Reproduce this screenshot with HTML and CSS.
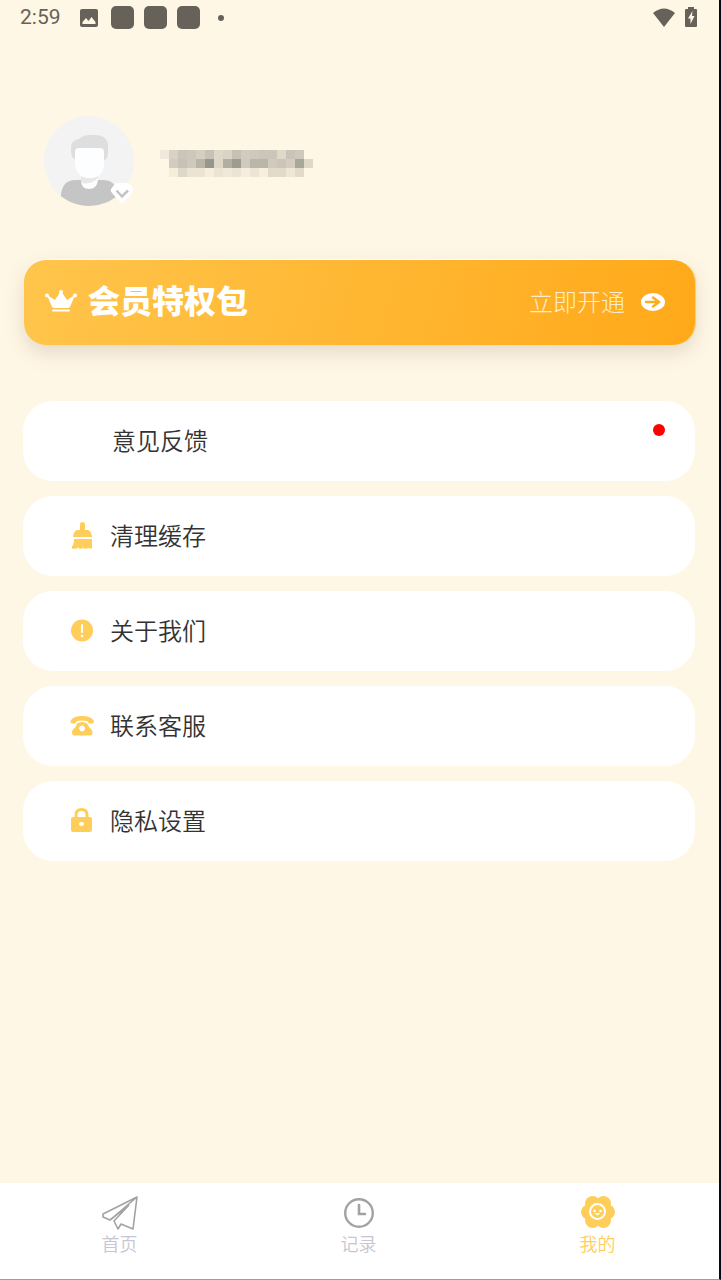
FILE: index.html
```
<!DOCTYPE html>
<html lang="zh-CN">
<head>
    <meta charset="UTF-8">
    <meta name="viewport" content="width=device-width, initial-scale=1.0">
    <title>我的</title>
    <link rel="stylesheet" href="styles.css">
</head>
<body>
    <div class="status-bar">
        <span class="time">2:59</span>
        <svg class="status-picture" width="18" height="18" viewBox="0 0 18 18">
            <rect width="18" height="18" rx="2" fill="#66625a"/>
            <path d="M2.500 15v-2l3.500-4 2.500 3 3-4 4 5v2z" fill="#fff7e5"/>
        </svg>
        <div class="status-apps">
            <span class="status-app"></span>
            <span class="status-app"></span>
            <span class="status-app"></span>
        </div>
        <span class="status-dot"></span>
        <svg class="status-wifi" width="24" height="19" viewBox="0 0 24 19">
            <path d="M1 5Q12-4 23 5L12 19z" fill="#66625a"/>
        </svg>
        <svg width="12" height="21" viewBox="0 0 12 21">
            <path d="M1 2h2V0h6v2h2q1 0 1 1v16q0 1-1 1H1q-1 0-1-1V3q0-1 1-1z" fill="#66625a"/>
            <path d="M7.500 4L3 11.500h2.500V17L9.500 9H7z" fill="#fff7e5"/>
        </svg>
    </div>

    <div class="profile">
        <div class="avatar">
            <svg width="90" height="90" viewBox="0 0 90 90">
                <clipPath id="avatar-clip"><circle cx="45" cy="45" r="45"/></clipPath>
                <g clip-path="url(#avatar-clip)">
                    <rect width="90" height="90" fill="#f3f3f3"/>
                    <path d="M17 90V78q2-14 14-14h28q12 0 15 13v13z" fill="#c5c5c5"/>
                    <path d="M37 56h17v8q-1 9-9 9t-8-9z" fill="#fcfdfd"/>
                    <path d="M37 60q9 5 17-1v3q-6 7-17 5z" fill="#e8e8e8"/>
                    <path d="M30 43q-3-3-3-7v-6q1-6 8-7 4-4 10-4h7q12 1 12 11v7q0 5-3 7z" fill="#dedede"/>
                    <path d="M31 36q0-4 4-4h21q4 0 4 4v11q0 15-14 15T31 47z" fill="#fcfeff"/>
                </g>
            </svg>
            <svg class="avatar-badge" width="24" height="22" viewBox="0 0 24 22">
                <path d="M7 1h10q3 0 4 2l2 4q1 2-1 4l-8 9q-2 2-4 0L2 11q-2-2-1-4l3-4q1-2 3-2z" fill="#fff"/>
                <path d="M6.500 8.500l5.500 6 6-6" fill="none" stroke="#c5c5c5" stroke-width="2.500"/>
            </svg>
        </div>
        <!-- 打码的用户名 -->
        <svg class="user-name" width="153" height="27" viewBox="0 0 17 3" shape-rendering="crispEdges">
            <rect x="0" y="0" width="1" height="1" fill="#f1e9d9"/>
            <rect x="1" y="0" width="1" height="1" fill="#d9d2c4"/>
            <rect x="2" y="0" width="1" height="1" fill="#cbc4b9"/>
            <rect x="3" y="0" width="1" height="1" fill="#cec7bb"/>
            <rect x="4" y="0" width="1" height="1" fill="#d5cec1"/>
            <rect x="5" y="0" width="1" height="1" fill="#c8c1b6"/>
            <rect x="6" y="0" width="1" height="1" fill="#dfd8c8"/>
            <rect x="7" y="0" width="1" height="1" fill="#d9d2c5"/>
            <rect x="8" y="0" width="1" height="1" fill="#c7c0b5"/>
            <rect x="9" y="0" width="1" height="1" fill="#d2cbbf"/>
            <rect x="10" y="0" width="1" height="1" fill="#cfc8bc"/>
            <rect x="11" y="0" width="2" height="1" fill="#ccc5ba"/>
            <rect x="13" y="0" width="1" height="1" fill="#e0d9c8"/>
            <rect x="14" y="0" width="1" height="1" fill="#cac3b9"/>
            <rect x="15" y="0" width="1" height="1" fill="#cfc8bd"/>
            <rect x="1" y="1" width="1" height="1" fill="#d2cbc0"/>
            <rect x="2" y="1" width="1" height="1" fill="#c8c2b6"/>
            <rect x="3" y="1" width="1" height="1" fill="#cfc8bc"/>
            <rect x="4" y="1" width="1" height="1" fill="#b9b5a8"/>
            <rect x="5" y="1" width="1" height="1" fill="#98958b"/>
            <rect x="6" y="1" width="1" height="1" fill="#ded7c8"/>
            <rect x="7" y="1" width="1" height="1" fill="#b2afa2"/>
            <rect x="8" y="1" width="1" height="1" fill="#9e9b90"/>
            <rect x="9" y="1" width="1" height="1" fill="#d0c9bd"/>
            <rect x="10" y="1" width="2" height="1" fill="#bab6a9"/>
            <rect x="12" y="1" width="1" height="1" fill="#d0c9bc"/>
            <rect x="13" y="1" width="1" height="1" fill="#cdc5b9"/>
            <rect x="14" y="1" width="1" height="1" fill="#d5cdc0"/>
            <rect x="15" y="1" width="1" height="1" fill="#a9a69a"/>
            <rect x="16" y="1" width="1" height="1" fill="#dfd8c8"/>
            <rect x="1" y="2" width="1" height="1" fill="#f4edda"/>
            <rect x="2" y="2" width="1" height="1" fill="#dfd8c8"/>
            <rect x="3" y="2" width="2" height="1" fill="#ece4d3"/>
            <rect x="5" y="2" width="1" height="1" fill="#f5eedc"/>
            <rect x="6" y="2" width="1" height="1" fill="#ebe4d3"/>
            <rect x="7" y="2" width="1" height="1" fill="#f0e9d7"/>
            <rect x="8" y="2" width="1" height="1" fill="#ebe4d4"/>
            <rect x="9" y="2" width="1" height="1" fill="#f5eedc"/>
            <rect x="10" y="2" width="1" height="1" fill="#ece4d4"/>
            <rect x="11" y="2" width="1" height="1" fill="#f6efdd"/>
            <rect x="12" y="2" width="2" height="1" fill="#e2dbca"/>
            <rect x="14" y="2" width="1" height="1" fill="#eee7d6"/>
            <rect x="15" y="2" width="1" height="1" fill="#e2dbca"/>
        </svg>
    </div>

    <a class="vip-banner" href="#">
        <svg width="32" height="23" viewBox="0 0 32 23" fill="#fff">
            <circle cx="16" cy="2" r="2"/>
            <circle cx="2" cy="5.500" r="2"/>
            <circle cx="30" cy="5.500" r="2"/>
            <path d="M2 5l8 5 6-9 6 9 8-5-5 12q-1 1-3 1H10q-2 0-3-1z"/>
            <rect x="7" y="19.500" width="18" height="2" rx="1"/>
        </svg>
        <span class="vip-title">会员特权包</span>
        <span class="vip-open">立即开通</span>
        <svg width="24" height="18" viewBox="0 0 24 18">
            <ellipse cx="12" cy="9" rx="12" ry="9" fill="#fff"/>
            <path d="M5 9h13M12 4.500l6 4.500-6 4.500" fill="none" stroke="#ffad20" stroke-width="2.500" stroke-linecap="round"/>
        </svg>
    </a>

    <div class="menu">
        <button class="menu-item feedback">
            <span>意见反馈</span>
            <i class="red-dot"></i>
        </button>
        <button class="menu-item">
            <svg width="24" height="28" viewBox="0 0 24 28" fill="#ffce5a">
                <path d="M10 8V2.500Q10 0 12.500 0T15 2.500V8h3q3 1 4 6v1H3v-1q1-5 4-6z"/>
                <path d="M4 17h18v8q1 2-1 1.500-2 .5-3-1-1 2-3 1-1 .500-2-1-1 2-3 1-1 .500-2-1-2 2-4 1-3 1-2-2 2-2 2-7.500z"/>
            </svg>
            <span>清理缓存</span>
        </button>
        <button class="menu-item">
            <svg width="24" height="28" viewBox="0 0 24 28">
                <circle cx="12" cy="13.500" r="11" fill="#ffce5a"/>
                <path d="M12 8v7" stroke="#fff" stroke-width="2" stroke-linecap="round"/>
                <circle cx="12" cy="19" r="1.300" fill="#fff"/>
            </svg>
            <span>关于我们</span>
        </button>
        <button class="menu-item">
            <svg width="24" height="28" viewBox="0 0 24 28" fill="#ffce5a">
                <path d="M2 11.500Q.500 11.500.500 9 3 4 12 4t12 5q0 2.500-1.500 2.500h-3Q18 11.500 18 9.500q-6-2-12 0 0 2-1.500 2z"/>
                <path fill-rule="evenodd" d="M7 11.500q5-3 10 0 2 4 4.500 6 1 1 1 3 0 3-2.500 3H4.500q-2.500 0-2.500-3 0-2 1-3 3-2 4-6zM12 13.500a3 3 0 1 0 .1 0z"/>
            </svg>
            <span>联系客服</span>
        </button>
        <button class="menu-item">
            <svg width="24" height="28" viewBox="0 0 24 28">
                <path d="M6 12V8q0-5.500 5.500-5.500T17 8v4" fill="none" stroke="#ffce5a" stroke-width="3"/>
                <rect x="1" y="10" width="21" height="15" rx="2" fill="#ffce5a"/>
                <ellipse cx="11.500" cy="17" rx="2.500" ry="2" fill="#fff"/>
            </svg>
            <span>隐私设置</span>
        </button>
    </div>

    <nav class="tab-bar">
        <a class="tab" href="#">
            <svg width="36" height="36" viewBox="0 0 36 36" fill="none" stroke="#a2a2a2" stroke-width="1.600" stroke-linejoin="round">
                <path d="M35 2L1 19v3l7 3zM27 10L12 26l4 8 3-5 12 5L35 2M27 10L8 25"/>
            </svg>
            <span>首页</span>
        </a>
        <a class="tab" href="#">
            <svg width="36" height="36" viewBox="0 0 36 36" fill="none" stroke="#a2a2a2">
                <circle cx="18" cy="18" r="13.800" stroke-width="2.400"/>
                <path d="M18 10v9h6" stroke-width="2.600" stroke-linecap="round"/>
            </svg>
            <span>记录</span>
        </a>
        <a class="tab active" href="#">
            <svg width="36" height="36" viewBox="0 0 36 36">
                <g fill="#ffce5a">
                    <circle cx="18" cy="17" r="13"/>
                    <circle cx="12.500" cy="8.500" r="7.500"/>
                    <circle cx="23.500" cy="8.500" r="7.500"/>
                    <circle cx="8.500" cy="17" r="7.500"/>
                    <circle cx="27.500" cy="17" r="7.500"/>
                    <circle cx="12.500" cy="25.500" r="7.500"/>
                    <circle cx="23.500" cy="25.500" r="7.500"/>
                </g>
                <circle cx="17.500" cy="16.500" r="7.500" fill="none" stroke="#fff" stroke-width="2"/>
                <circle cx="14.500" cy="16" r="1.200" fill="#fff"/>
                <circle cx="20.500" cy="16" r="1.200" fill="#fff"/>
                <path d="M15.500 18.500q2 2.500 4 0z" fill="#fff" stroke="#fff"/>
            </svg>
            <span>我的</span>
        </a>
    </nav>
</body>
</html>
```

FILE: styles.css
```
* {
    box-sizing: border-box;
}

body {
    margin: 0;
    min-height: 100vh;
    display: flex;
    flex-direction: column;
    background-color: #fff7e5;
    border-right: 2px solid #050914;
    border-bottom: 1px solid #9a9fa6;
    font-family: "Noto Sans CJK SC", sans-serif;
}

svg {
    display: block;
    flex-shrink: 0;
}

/* 状态栏 */
.status-bar {
    display: flex;
    align-items: center;
    height: 35px;
    padding: 0 22px 0 20px;
    color: #66625a;
}

.time {
    font-family: Roboto, sans-serif;
    font-size: 21px;
    font-weight: 400;
    line-height: 35px;
}

.status-picture {
    margin-left: 19px;
}

.status-apps {
    display: flex;
    gap: 10px;
    margin-left: 13px;
}

.status-app {
    width: 23px;
    height: 23px;
    border-radius: 5px;
    background-color: #66625a;
}

.status-dot {
    width: 6px;
    height: 6px;
    margin-left: 18px;
    border-radius: 50%;
    background-color: #66625a;
}

.status-wifi {
    margin-left: auto;
    margin-right: 9px;
}

/* 用户信息 */
.profile {
    display: flex;
    align-items: center;
    gap: 26px;
    padding: 81px 44px 54px;
}

.avatar {
    position: relative;
}

.avatar-badge {
    position: absolute;
    right: 0;
    bottom: 2px;
}

.user-name {
    margin-top: 4px;
}

/* 会员横幅 */
.vip-banner {
    display: flex;
    align-items: center;
    height: 85px;
    margin: 0 24px;
    padding: 0 30px 2px 21px;
    border-radius: 22px;
    background: linear-gradient(105deg, #ffc54c, #ffa919);
    box-shadow: 0 -1px 1px #fff, 1px 0 1px #e8d25a, 0 8px 20px rgba(120, 100, 90, 0.2);
    color: #fff;
    text-decoration: none;
}

.vip-title {
    margin-left: 11px;
    padding-bottom: 6px;
    font-size: 32px;
    font-weight: 900;
    line-height: 40px;
}

.vip-open {
    margin-left: auto;
    margin-right: 16px;
    padding-bottom: 2px;
    font-size: 24px;
    font-weight: 300;
    line-height: 40px;
    color: #ffeccb;
}

/* 功能列表 */
.menu {
    display: flex;
    flex-direction: column;
    gap: 15px;
    margin: 56px 24px 24px 23px;
}

.menu-item {
    display: flex;
    align-items: center;
    gap: 16px;
    height: 80px;
    padding: 0 30px 0 47px;
    border: none;
    border-radius: 30px;
    background-color: #fff;
    color: #333;
    font-family: inherit;
    font-size: 24px;
    font-weight: 350;
    line-height: 36px;
    text-align: left;
    cursor: pointer;
}

.menu-item span {
    padding-bottom: 2px;
}

.feedback {
    padding-left: 89px;
}

.red-dot {
    width: 12px;
    height: 12px;
    margin-left: auto;
    margin-bottom: 22px;
    border-radius: 50%;
    background-color: #f00;
}

/* 底部导航 */
.tab-bar {
    display: flex;
    height: 96px;
    margin-top: auto;
    padding-right: 2px;
    background-color: #fff;
}

.tab {
    flex: 1;
    display: flex;
    flex-direction: column;
    align-items: center;
    padding-top: 12px;
    color: #c8c6d2;
    font-size: 18px;
    font-weight: 350;
    line-height: 24px;
    text-decoration: none;
}

.tab.active {
    color: #ffce5a;
}
```
